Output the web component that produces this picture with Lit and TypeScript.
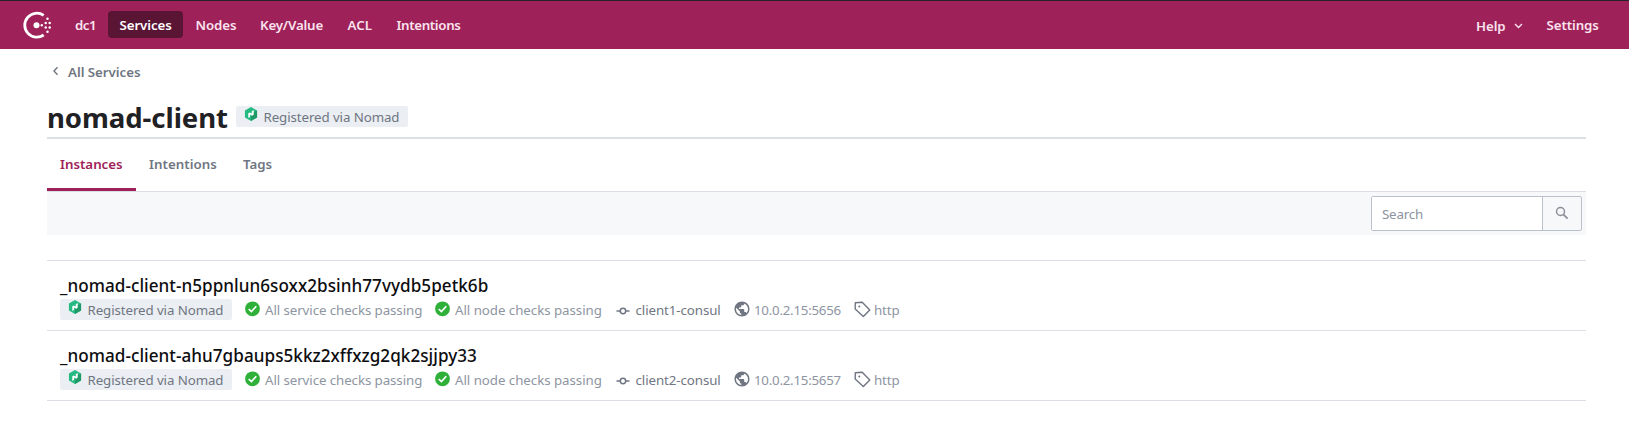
import { LitElement, html, css, svg } from "lit";
import { customElement, property } from "lit/decorators.js";

const base = css`
  * { box-sizing: border-box; }
  svg { display: block; flex: none; }
`;

const nomadIcon = svg`<svg width="14" height="14" viewBox="0 0 24 24">
  <path fill="#25ba81" d="M12 0 22.395 6V18L12 24 1.605 18V6Z"/>
  <path fill="#1f9967" d="M12 12 22.395 6V18L12 24Z"/>
  <path fill="#fff" d="M16.630 13.210 13.854 14.813 10.501 12.970V16.811L7.369 18.793V10.787L9.864 9.235 13.323 11.066V7.141L16.630 5.154Z"/>
</svg>`;
const checkIcon = svg`<svg width="16" height="16" viewBox="0 0 16 16">
  <circle cx="7.500" cy="7.800" r="7.400" fill="#2eb039"/>
  <path d="M3.700 8 6.400 10.600 11.300 5.200" fill="none" stroke="#fff" stroke-width="1.7"/>
</svg>`;
const nodeIcon = svg`<svg width="14" height="8" viewBox="0 0 14 8">
  <path d="M.5 4H4M10 4h3.500" stroke="#6f7682" stroke-width="1.5"/>
  <circle cx="7" cy="4" r="2.700" fill="none" stroke="#6f7682" stroke-width="1.5"/>
</svg>`;
const globeIcon = svg`<svg width="18" height="18" viewBox="0 0 24 24">
  <path fill="#6f7682" d="M12 2C6.480 2 2 6.480 2 12s4.480 10 10 10 10-4.480 10-10S17.520 2 12 2zm-1 17.930c-3.950-.490-7-3.850-7-7.930 0-.620.080-1.210.210-1.790L9 15v1c0 1.100.900 2 2 2v1.930zm6.900-2.540c-.260-.810-1-1.390-1.900-1.390h-1v-3c0-.550-.450-1-1-1H8v-2h2c.550 0 1-.450 1-1V7h2c1.100 0 2-.900 2-2v-.410c2.930 1.190 5 4.060 5 7.410 0 2.080-.800 3.970-2.100 5.390z"/>
</svg>`;
const tagIcon = svg`<svg width="17" height="17" viewBox="0 0 17 17">
  <path d="M1.300 1.800 8.200 1.200 15.800 8.900 9.300 15.600 1.200 8.100Z" fill="none" stroke="#6f7682" stroke-width="1.4" stroke-linejoin="round"/>
  <circle cx="5.300" cy="5.500" r="1" fill="#6f7682"/>
</svg>`;

@customElement("source-badge")
class SourceBadge extends LitElement {
  static styles = [base, css`
    :host { display: flex; width: 172px; height: 21px; padding-left: 8px; background: #ebeef2; border-radius: 2px; color: #6f7682; }
    .mark { padding-top: 1px; width: 19.500px; }
    .label { font-size: 13.300px; line-height: 22px; letter-spacing: -.090px; white-space: nowrap; }
  `];
  render() {
    return html`<span class="mark">${nomadIcon}</span><span class="label">Registered via Nomad</span>`;
  }
}

@customElement("top-bar")
class TopBar extends LitElement {
  static styles = [base, css`
    :host { display: flex; height: 49px; border-top: 1px solid #252327; background: #9e2159; color: #fae3ee; font-size: 13.300px; font-weight: 600; padding: 10px 19px 0 22px; align-items: flex-start; }
    .logo { width: 41px; }
    .item { height: 27px; line-height: 28.500px; padding-left: 12px; border-radius: 4px; white-space: nowrap; letter-spacing: -.100px; }
    .dc { width: 45px; letter-spacing: -.500px; }
    .services { width: 75px; background: #5a1434; color: #fff; padding-left: 11.500px; }
    .nodes { width: 65px; padding-left: 12.500px; }
    .kv { width: 87px; letter-spacing: -.180px; }
    .acl { width: 49px; letter-spacing: .100px; padding-left: 12.500px; }
    .intentions { letter-spacing: -.350px; padding-left: 12.500px; }
    .space { flex: 1; }
    .help { width: 70px; display: flex; padding: 1px 0 0; gap: 8px; }
    .help svg { margin-top: 11px; }
    .settings { width: 64px; padding-left: .500px; }
  `];
  render() {
    return html`
      <span class="logo"><svg width="31" height="29" viewBox="-1 0 31 29" fill="#fff">
        <path d="M20.700 4.400A12 12 0 1 0 20.700 24" fill="none" stroke="#fff" stroke-width="2.800"/>
        <circle cx="13.500" cy="14.300" r="3"/>
        <circle cx="18.800" cy="14.300" r="1.200"/>
        <circle cx="22.700" cy="12" r="1.250"/><circle cx="22.700" cy="16.600" r="1.250"/>
        <circle cx="24.500" cy="7.800" r="1.250"/><circle cx="24.500" cy="20.800" r="1.250"/>
        <circle cx="26.700" cy="12" r="1.250"/><circle cx="26.700" cy="16.600" r="1.250"/>
      </svg></span>
      <span class="item dc">dc1</span><span class="item services">Services</span>
      <span class="item nodes">Nodes</span><span class="item kv">Key/Value</span>
      <span class="item acl">ACL</span><span class="item intentions">Intentions</span>
      <span class="space"></span>
      <span class="item help">Help<svg width="9" height="6" viewBox="0 0 9 6"><path d="M1 1 4.500 4.500 8 1" fill="none" stroke="#fae3ee" stroke-width="1.400"/></svg></span>
      <span class="item settings">Settings</span>`;
  }
}

@customElement("instance-row")
class InstanceRow extends LitElement {
  @property() name = "";
  @property() node = "";
  @property() address = "";
  static styles = [base, css`
    :host { display: block; height: 70px; border-bottom: 1px solid #dcdfe6; padding: 10px 0 0 13px; }
    .name { height: 28px; font-size: 17.100px; line-height: 30px; font-weight: 500; letter-spacing: .045px; color: #0d0d10; white-space: nowrap; }
    .meta { display: flex; height: 21px; color: #8e95a2; font-size: 13.300px; line-height: 22px; white-space: nowrap; letter-spacing: -.080px; }
    .meta svg { margin-top: 2px; }
    .cell { display: flex; }
    .service { width: 190px; padding-left: 12.500px; gap: 4.500px; }
    .nodecheck { width: 194px; padding-left: 12.500px; gap: 4.500px; letter-spacing: -.040px; }
    .client { width: 117px; gap: 5.500px; color: #6f7682; }
    .client svg { margin-top: 7.500px; }
    .ip { width: 120.500px; gap: 3px; letter-spacing: -.240px; }
    .ip svg { margin-top: 1px; }
    .tag { gap: 3.500px; letter-spacing: -.120px; }
  `];
  render() {
    return html`
      <div class="name">${this.name}</div>
      <div class="meta">
        <source-badge></source-badge>
        <span class="cell service">${checkIcon}All service checks passing</span>
        <span class="cell nodecheck">${checkIcon}All node checks passing</span>
        <span class="cell client">${nodeIcon}${this.node}</span>
        <span class="cell ip">${globeIcon}${this.address}</span>
        <span class="cell tag">${tagIcon}http</span>
      </div>`;
  }
}

@customElement("app-root")
class AppRoot extends LitElement {
  static styles = [base, css`
    :host { display: block; height: 427px; overflow: hidden; background: #fff; font-family: "Noto Sans", "Open Sans", sans-serif; }
    .page { padding: 0 43px 0 47px; }
    .back { display: flex; height: 47px; padding: 13px 0 0 5px; color: #6f7682; font-size: 13.300px; line-height: 20px; font-weight: 600; letter-spacing: -.030px; gap: 9px; }
    .back svg { margin-top: 4px; }
    .title { display: flex; height: 43px; border-bottom: 2px solid #dcdfe6; gap: 7px; }
    .title source-badge { margin-top: 10px; }
    h1 { margin: 0; width: 182px; font-size: 27.550px; line-height: 43px; font-weight: 700; letter-spacing: -.060px; color: #1f2124; white-space: nowrap; }
    .tabs { display: flex; height: 53px; border-bottom: 1px solid #dcdfe6; font-size: 13.300px; font-weight: 600; line-height: 51px; color: #6f7682; }
    .tab { padding: 0 0 0 13px; height: 52px; white-space: nowrap; }
    .instances { width: 89px; color: #9e2159; border-bottom: 3px solid #9e2159; }
    .intentions { width: 94px; letter-spacing: .040px; }
    .filter { height: 43px; background: #f7f8fa; padding: 4px 4px 0; display: flex; justify-content: flex-end; }
    .search { display: flex; width: 211px; height: 35px; border: 1px solid #bac1cc; border-radius: 2px; }
    .input { width: 171px; background: #fff; border-right: 1px solid #bac1cc; padding-left: 10px; font-size: 13.300px; line-height: 35px; letter-spacing: -.180px; color: #8b93a0; }
    .go { padding: 9px 0 0 12px; }
    .list { margin-top: 25px; border-top: 1px solid #dcdfe6; }
  `];
  render() {
    return html`
      <top-bar></top-bar>
      <main class="page">
        <div class="back"><svg width="7" height="10" viewBox="0 0 7 10"><path d="M5.500 1.200 2 5 5.500 8.800" fill="none" stroke="#6f7682" stroke-width="1.400"/></svg>All Services</div>
        <div class="title"><h1>nomad-client</h1><source-badge></source-badge></div>
        <nav class="tabs"><span class="tab instances">Instances</span><span class="tab intentions">Intentions</span><span class="tab">Tags</span></nav>
        <div class="filter"><div class="search"><span class="input">Search</span><span class="go">
          <svg width="14" height="14" viewBox="0 0 14 14" fill="none" stroke="#8a8f98"><circle cx="5.500" cy="5.500" r="4" stroke-width="1.500"/><path d="M8.300 8.300 12.600 12.600" stroke-width="1.700"/></svg>
        </span></div></div>
        <div class="list">
          <instance-row name="_nomad-client-n5ppnlun6soxx2bsinh77vydb5petk6b" node="client1-consul" address="10.0.2.15:5656"></instance-row>
          <instance-row name="_nomad-client-ahu7gbaups5kkz2xffxzg2qk2sjjpy33" node="client2-consul" address="10.0.2.15:5657"></instance-row>
        </div>
      </main>`;
  }
}
